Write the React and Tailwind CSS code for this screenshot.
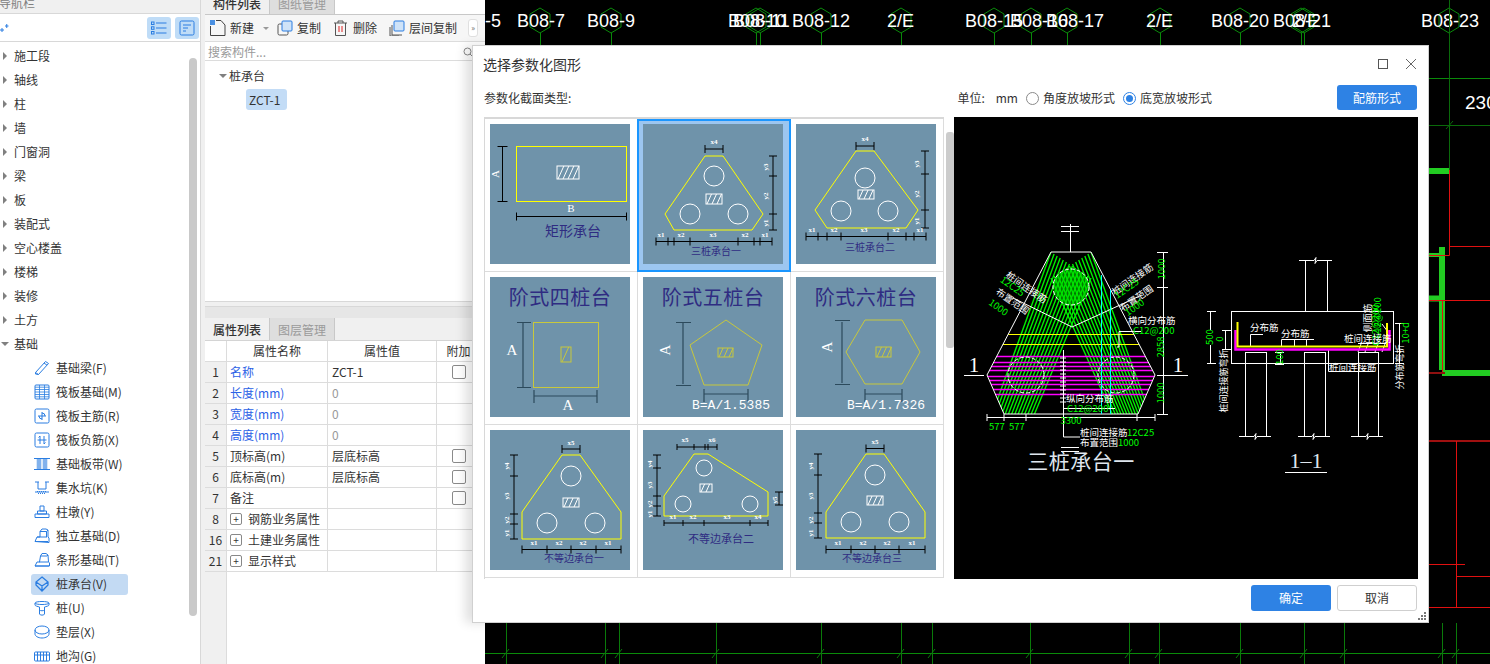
import React from "react";

const BLUE = "#2a7de1";
const NAVY = "#2f2c82";

const Icon = ({ children, size = 16 }) => (
  <svg width={size} height={size} viewBox="0 0 16 16" fill="none" stroke={BLUE} strokeWidth="1" className="shrink-0">
    {children}
  </svg>
);

const navIcons = [
  <Icon><path d="M1.5 12.5 11.5 1.5l3 2-10 11-3-.5zM1.5 12.5l3 2M10 3l3 2.2" /></Icon>,
  <Icon><rect x="1" y="1" width="14" height="14" rx="1" /><path d="M1 5.5h14M1 10.5h14M5.5 1v14M10.5 1v14M1 3.2h14M1 8h14M1 12.8h14" strokeWidth=".8" /></Icon>,
  <Icon><rect x="1" y="1" width="14" height="14" rx="1.5" /><path d="M8 4v8M4 8h8M8 5a3 3 0 0 1 3 3M5 8a3 3 0 0 0 3 3" /></Icon>,
  <Icon><rect x="1" y="1" width="14" height="14" rx="1.5" /><path d="M6 4v8M10 4v8M3.5 8h9M6 4 4.5 5.5M10 12l1.5-1.5" /></Icon>,
  <Icon><rect x="2" y="3" width="12" height="10" fill="#d9e8f8" stroke="none" /><path d="M0 2.5h16M0 13.5h16M4 3v10M6 3v10M10 3v10M12 3v10" /></Icon>,
  <Icon><path d="M1 2h3v7h8V2h3M4 2 5 2M11 2h1M1 12h14" /><path d="M3 11.5h10M4 13.5h8" strokeDasharray="1 1" /></Icon>,
  <Icon><path d="M6 2h4v5H6zM3.5 7h9v3h-9zM1 10h14v3.5H1z" /></Icon>,
  <Icon><path d="M1 13.5 3 9h3V3.5L8 1h4l2 1v7l1 1v4.5zM6 3.500h6.500L14 2M12.500 3.500V9M3 9h10M1 13.500h13" /></Icon>,
  <Icon><path d="M1 14 3 10h2.500L6.500 4 8 1.500h4L14 3l.5 7 1 1v3zM6.500 4h6.500l1-1M5 10h9M1 14h14" /></Icon>,
  <Icon><path d="M8 1 14 6v3l-6 6-6-6V6zM8 9v6M2 6l6 4 6-4" strokeWidth="1.300" /></Icon>,
  <Icon><path d="M1 3c0-2 14-2 14 0v2c0 1-3 1.500-4.500 2v7c0 1.500-5 1.500-5 0V7C4 6.500 1 6 1 5zM1 3c0 2 14 2 14 0M5.500 10c1 1 4 1 5 0" /></Icon>,
  <Icon><ellipse cx="8" cy="6" rx="7" ry="4" /><path d="M1 6v4c0 2 3 4 7 4s7-2 7-4V6" /></Icon>,
  <Icon><rect x="0.500" y="4" width="15" height="9" rx="1" /><path d="M0.500 7h15M3.500 4v9M6.500 4v9M9.500 4v9M12.500 4v9" /></Icon>,
];

const topItems = ["施工段", "轴线", "柱", "墙", "门窗洞", "梁", "板", "装配式", "空心楼盖", "楼梯", "装修", "土方"];
const subItems = ["基础梁(F)", "筏板基础(M)", "筏板主筋(R)", "筏板负筋(X)", "基础板带(W)", "集水坑(K)", "柱墩(Y)", "独立基础(D)", "条形基础(T)", "桩承台(V)", "桩(U)", "垫层(X)", "地沟(G)"];

const CaretR = () => <span className="mr-[7px] h-0 w-0 border-y-[4px] border-l-[4px] border-y-transparent border-l-[#808080]" />;
const CaretD = () => <span className="h-0 w-0 border-x-[4px] border-t-[4px] border-x-transparent border-t-[#808080]" />;

function Nav() {
  return (
    <aside className="flex h-[664px] w-[201px] shrink-0 flex-col border-r border-[#d8d8d8] bg-white">
      <div className="-mt-[8px] flex h-[22px] shrink-0 items-center border-b border-[#d8d8d8] bg-[#f0f0f0] pt-[1px] text-[12px] leading-none text-[#808080]">
        <span className="-ml-[1px]">导航栏</span>
      </div>
      <div className="flex h-[28px] shrink-0 items-center justify-between border-b border-[#d8d8d8] pr-[1px]">
        <svg width="9" height="10" viewBox="0 0 9 10" stroke={BLUE} strokeWidth="1"><path d="M0 7h4M2 5v4M5 3h3.500M6.750 1v4" /></svg>
        <div className="flex gap-[4px]">
          <span className="flex h-[22px] w-[24px] items-center justify-center rounded-[3px] bg-[#bfdcf7]">
            <svg width="16" height="14" viewBox="0 0 16 14" fill="none" stroke={BLUE}><rect x="0.500" y="1" width="2.500" height="2.500" /><rect x="0.500" y="5.800" width="2.500" height="2.500" /><rect x="0.500" y="10.500" width="2.500" height="2.500" /><path d="M5 2h10.500M5 7h10.500M5 12h10.500" /></svg>
          </span>
          <span className="flex h-[22px] w-[24px] items-center justify-center rounded-[3px] bg-[#bfdcf7]">
            <svg width="16" height="16" viewBox="0 0 16 16" fill="none" stroke={BLUE}><rect x="1" y="1" width="14" height="14" rx="1.500" /><path d="M4 5h8M4 8h5M4 11h3" /></svg>
          </span>
        </div>
      </div>
      <div className="flex min-h-0 flex-1 pr-[3px]">
        <div className="min-w-0 flex-1 overflow-hidden pt-[2px] text-[12px] text-[#333]">
          {topItems.map((t) => (
            <div key={t} className="flex h-[24px] items-center pl-[3px] leading-none"><CaretR />{t}</div>
          ))}
          <div className="flex h-[24px] items-center pl-[1px] leading-none"><CaretD /><span className="ml-[5px]">基础</span></div>
          {subItems.map((t, i) => (
            <div key={t} className="flex h-[24px] items-center pl-[31px] leading-none">
              <div className={`flex h-[21px] items-center gap-[6px] rounded-[3px] pl-[3px] ${t === "桩承台(V)" ? "w-[97px] bg-[#c3daf3]" : ""}`}>
                {navIcons[i]}<span>{t}</span>
              </div>
            </div>
          ))}
        </div>
        <div className="mt-[16px] h-[558px] w-[8px] shrink-0 rounded-[4px] bg-[#c9c9c9]" />
      </div>
    </aside>
  );
}

const Tab = ({ active, children }) => (
  <div className={`flex h-full w-[65px] items-center justify-center border-r border-[#c8c8c8] pt-[1px] text-[12px] leading-none ${active ? "bg-[#f0f0f0] font-medium text-[#333]" : "bg-[#dedede] text-[#9a9a9a]"}`}>
    {children}
  </div>
);

function Middle() {
  const rows = [
    ["1", "名称", "ZCT-1", true, "blue"],
    ["2", "长度(mm)", "0", false, "blue"],
    ["3", "宽度(mm)", "0", false, "blue"],
    ["4", "高度(mm)", "0", false, "blue"],
    ["5", "顶标高(m)", "层底标高", true, ""],
    ["6", "底标高(m)", "层底标高", true, ""],
    ["7", "备注", "", true, ""],
    ["8", "钢筋业务属性", "", false, "plus"],
    ["16", "土建业务属性", "", false, "plus"],
    ["21", "显示样式", "", false, "plus"],
  ];
  return (
    <section className="flex h-[664px] w-[284px] shrink-0 flex-col bg-[#f0f0f0] pl-[4px] text-[12px] text-[#333]">
      <div className="-mt-[8px] flex h-[310px] shrink-0 flex-col border-b border-[#d8d8d8] bg-white">
        <div className="flex h-[23px] shrink-0 border-b border-[#c8c8c8]"><Tab active>构件列表</Tab><Tab>图纸管理</Tab></div>
        <div className="flex h-[27px] shrink-0 items-center border-b border-[#dcdcdc] bg-[#f6f6f6] pl-[5px] leading-none">
          <svg width="16" height="16" viewBox="0 0 16 16" fill="none" stroke="#444"><rect x="0" y="0" width="5" height="5" fill="#4a90e2" stroke="none" /><path d="M.500 6v9.500h14.500V5l-4-4.500H6" /></svg>
          <span className="ml-[4px]">新建</span>
          <span className="ml-[9px] mt-[1px] h-0 w-0 border-x-[3px] border-t-[3px] border-x-transparent border-t-[#999]" />
          <svg className="ml-[8px]" width="16" height="16" viewBox="0 0 16 16" fill="none"><rect x="1" y="4" width="10" height="11" rx="1.500" stroke="#555" /><rect x="5" y="1" width="10" height="10" rx="1" fill="#cfe3f8" stroke={BLUE} /></svg>
          <span className="ml-[4px]">复制</span>
          <svg className="ml-[12px]" width="15" height="16" viewBox="0 0 15 16" fill="none" stroke="#555"><path d="M1 3h13M5 3V1h5v2M2.500 3v12.500h10V3" /><path d="M6 6v6M9 6v6" stroke="#d22" /></svg>
          <span className="ml-[5px]">删除</span>
          <svg className="ml-[12px]" width="16" height="16" viewBox="0 0 16 16" fill="none"><path d="M3 5v10h10" stroke="#555" /><path d="M1 7v9h9" stroke="#555" /><rect x="5" y="1" width="10" height="10" rx="1" fill="#cfe3f8" stroke={BLUE} /></svg>
          <span className="ml-[4px]">层间复制</span>
          <span className="ml-[11px] flex h-[18px] w-[10px] items-center justify-center rounded-[3px] border border-[#e0e0e0] bg-white text-[8px] text-[#666]">»</span>
        </div>
        <div className="flex h-[19px] shrink-0 items-center justify-between border-b border-[#dcdcdc] pl-[3px] pr-[12px] pt-[1px] leading-none text-[#9a9a9a]">
          <span>搜索构件...</span>
          <svg width="10" height="10" viewBox="0 0 10 10" fill="none" stroke="#888"><circle cx="4.500" cy="4.500" r="3.500" /><path d="m7 7 3 3" /></svg>
        </div>
        <div className="px-[14px] pt-[3px]">
          <div className="flex h-[24px] items-center gap-[2px] leading-none"><CaretD /><span>桩承台</span></div>
          <div className="ml-[27px] mt-[1px] flex h-[21px] w-[41px] items-center rounded-[3px] bg-[#c3dcf6] pl-[3px] leading-none">ZCT-1</div>
        </div>
      </div>
      <div className="mt-[4px] h-[12px] shrink-0 border-t border-[#d8d8d8] bg-[#e6e6e6]" />
      <div className="flex min-h-0 flex-1 flex-col bg-white">
        <div className="flex h-[23px] shrink-0 border-b border-[#d4d4d4] bg-[#f0f0f0]"><Tab active>属性列表</Tab><Tab>图层管理</Tab></div>
        <div className="flex h-[21px] shrink-0 border-b border-[#dcdcdc] leading-none">
          <div className="w-[22px] border-r border-[#dcdcdc]" />
          <div className="flex w-[101px] items-center justify-center border-r border-[#dcdcdc]">属性名称</div>
          <div className="flex w-[109px] items-center justify-center border-r border-[#dcdcdc]">属性值</div>
          <div className="flex w-[43px] items-center justify-center">附加</div>
        </div>
        {rows.map(([n, name, val, check, kind]) => (
          <div key={n} className="flex h-[21px] shrink-0 border-b border-[#dcdcdc] leading-none">
            <div className="flex w-[22px] items-center justify-center border-r border-[#dcdcdc] bg-[#f0f0f0]">{n}</div>
            <div className={`flex w-[101px] items-center border-r border-[#dcdcdc] pl-[3px] ${kind === "blue" ? "text-[#2c62e6]" : ""}`}>
              {kind === "plus" && <span className="mr-[6px] flex h-[12px] w-[12px] items-center justify-center rounded-[2px] border border-[#888] text-[10px]">+</span>}
              {name}
            </div>
            <div className={`flex w-[109px] items-center border-r border-[#dcdcdc] pl-[4px] ${val === "0" ? "text-[#999]" : ""}`}>{val}</div>
            <div className="flex w-[43px] items-center justify-center">
              {check && <span className="h-[14px] w-[14px] rounded-[2px] border border-[#8a8a8a] bg-white" />}
            </div>
          </div>
        ))}
        <div className="w-[22px] flex-1 border-r border-[#dcdcdc] bg-[#f0f0f0]" />
      </div>
    </section>
  );
}

const labels = [["-5", 485], ["B08-7", 517], ["B08-9", 587], ["B08-10", 728], ["B08-11", 733], ["B08-12", 792], ["2/E", 887], ["B08-15", 965], ["B08-16", 1010], ["B08-17", 1046], ["2/E", 1146], ["B08-20", 1211], ["B08-21", 1273], ["2/E", 1292], ["B08-23", 1421]];
const hexes = [540, 611, 756, 760, 821, 901, 994, 1031, 1067, 1160, 1240, 1301, 1304, 1449];
const botLines = [506, 605, 619, 716, 821, 901, 932, 1030, 1129, 1159, 1240, 1304, 1344, 1442, 1456];

function Canvas() {
  return (
    <div className="h-[664px] min-w-0 flex-1 overflow-hidden bg-black">
      <svg width="1005" height="664" viewBox="485 0 1005 664" fill="none" className="block">
        <g stroke="#0a8a0a">
          {hexes.map((x) => (
            <g key={x}>
              <path d={`M${x} 8l10 6v13l-10 6-10-6V14zM${x}.5 33V46`} />
            </g>
          ))}
        </g>
        {labels.map(([t, x], i) => (
          <text key={i} x={x} y="27" fontSize="18" fill="#fff" className="font-['Liberation_Sans']">{t}</text>
        ))}
        <text x="1465" y="109" fontSize="19" fill="#fff" className="font-['Liberation_Sans']">230</text>
        <path d="M1429 78.500h61" stroke="#0a8a0a" />
        <path d="M1429 125.500h61M1449.500 0V170M1446 129l7-8" stroke="#0a6a0a" />
        <path d="M1429 171h20" stroke="#22cc22" strokeWidth="6" />
        <path d="M1429 255h10" stroke="#22cc22" strokeWidth="4" />
        <path d="M1442 247v123M1429 298.500h11M1442 373h48" stroke="#22cc22" strokeWidth="6" />
        <path d="M1449.500 170v85.500H1429M1449.500 246.500H1490M1429 300.500h61M1442.500 300v72" stroke="#e01010" />
        <path d="M1429 373h16" stroke="#901010" strokeWidth="2" />
        <path d="M1429 441h61" stroke="#a01010" strokeWidth="2" />
        <path d="M1456.500 441v166M1429 564.500h36M1456 576.500h34M1429 607.500h61" stroke="#e01010" />
        <path d="M485 653.500h1005" stroke="#0a8a0a" />
        {botLines.map((x) => (
          <path key={x} d={`M${x}.5 623v41M${x - 4} 658l7-9`} stroke="#0a7a0a" />
        ))}
      </svg>
    </div>
  );
}

const DimH = ({ y, xs, tick = 4 }) => (
  <path d={`M${xs[0]} ${y}H${xs[xs.length - 1]}` + xs.map((x) => `M${x} ${y - tick}V${y + tick}`).join("")} stroke="#000" />
);
const DimV = ({ x, ys, tick = 4 }) => (
  <path d={`M${x} ${ys[0]}V${ys[ys.length - 1]}` + ys.map((y) => `M${x - tick} ${y}H${x + tick}`).join("")} stroke="#000" />
);
const Hatch = ({ x, y, w, h, c = "#fff" }) => {
  const n = Math.floor((w - h * 0.45) / 5);
  let d = "";
  for (let i = 0; i <= n; i++) d += `M${x + 1 + i * 5} ${y + h}L${x + 1 + i * 5 + h * 0.45} ${y}`;
  return (
    <g stroke={c}>
      <rect x={x} y={y} width={w} height={h} />
      <path d={d} />
    </g>
  );
};
const Holes = ({ c, r = 10 }) => c.map(([x, y], i) => <circle key={i} cx={x} cy={y} r={r} stroke="#fff" />);
const Tiny = ({ x, y, t, rot }) => (
  <text x={x} y={y} fontSize="7" fontWeight="700" fill="#fff" textAnchor="middle" transform={rot ? `rotate(-90 ${x} ${y})` : undefined} className="font-['Liberation_Serif']">{t}</text>
);
const Cap = ({ x, y, t, s = 10 }) => (
  <text x={x} y={y} fontSize={s} fill={NAVY} textAnchor="middle" dominantBaseline="middle">{t}</text>
);
const Big = ({ t }) => <text x="70" y="23" fontSize="20" fill={NAVY} textAnchor="middle" dominantBaseline="middle" letterSpacing="0.500">{t}</text>;
const SerifA = ({ x, y, rot }) => (
  <text x={x} y={y} fontSize="15" fill="#fff" textAnchor="middle" dominantBaseline="middle" transform={rot ? `rotate(-90 ${x} ${y})` : undefined} className="font-['Liberation_Serif']">A</text>
);
const Arrows = ({ d }) => <path d={d} stroke="#2c4a5c" strokeWidth="1.200" />;
const Yellow = ({ p, c = "#ffff00", w = 1 }) => <polygon points={p} stroke={c} strokeWidth={w} />;

const tiles = [
  <>
    <rect x="26.500" y="22.500" width="110" height="55" stroke="#ffff00" />
    <Hatch x={67} y={42} w={22} h={13} />
    <DimV x={12.500} ys={[22.500, 77.500]} tick={5} />
    <text x="6" y="50" fontSize="11" fill="#fff" textAnchor="middle" dominantBaseline="middle" transform="rotate(-90 6 50)" className="font-['Liberation_Serif']">A</text>
    <DimH y={92.500} xs={[26.500, 136.500]} />
    <text x="81" y="85" fontSize="11" fill="#fff" textAnchor="middle" dominantBaseline="middle" className="font-['Liberation_Serif']">B</text>
    <Cap x={83} y={108} t="矩形承台" s={14} />
  </>,
  <>
    <Yellow p="62,32 80,32 120,90 109,106 31,106 22,90" />
    <Holes c={[[71, 52], [47, 90], [95, 90]]} />
    <Hatch x={63} y={70} w={16} h={10} />
    <DimH y={25} xs={[62, 80]} /><Tiny x={71} y={20} t="x4" />
    <DimV x={130} ys={[32, 52, 90, 106]} />
    <Tiny x={125} y={43} t="y3" rot /><Tiny x={125} y={72} t="y2" rot /><Tiny x={125} y={99} t="y1" rot />
    <DimH y={117.500} xs={[13, 25, 31, 47, 95, 111, 117, 129]} />
    <Tiny x={18} y={113} t="x1" /><Tiny x={38} y={113} t="x2" /><Tiny x={70} y={113} t="x3" /><Tiny x={102} y={113} t="x2" /><Tiny x={122} y={113} t="x1" />
    <Cap x={73} y={128} t="三桩承台一" />
  </>,
  <>
    <Yellow p="60,27 78,27 122,86 110,104 31,104 19,86" />
    <Holes c={[[69, 54], [45, 87], [92, 87]]} />
    <Hatch x={62} y={66} w={16} h={9} />
    <DimH y={22} xs={[60, 78]} /><Tiny x={69} y={17} t="x4" />
    <DimV x={129} ys={[27, 50, 86, 104]} />
    <Tiny x={123} y={40} t="y3" rot /><Tiny x={123} y={70} t="y2" rot /><Tiny x={123} y={97} t="y1" rot />
    <DimH y={112.500} xs={[10, 22, 31, 45, 92, 110, 118, 130]} />
    <Tiny x={16} y={108} t="x1" /><Tiny x={38} y={108} t="x2" /><Tiny x={68} y={108} t="x3" /><Tiny x={100} y={108} t="x2" /><Tiny x={124} y={108} t="x1" />
    <Cap x={74} y={124} t="三桩承台二" />
  </>,
  <>
    <Big t="阶式四桩台" />
    <rect x="43.500" y="45.500" width="65" height="65" stroke="#c8c83c" />
    <Hatch x={71} y={70} w={10} h={15} c="#c8c83c" />
    <Arrows d="M33 46V110M27 45.500H41M27 110.500H41M44 119H107M44 113V126M107 113V126" />
    <SerifA x={22} y={75} /><SerifA x={78} y={130} />
  </>,
  <>
    <Big t="阶式五桩台" />
    <Yellow p="83,43 119,68 105,108 61,108 47,68" c="#c8c83c" />
    <Hatch x={75} y={71} w={15} h={9} c="#c8c83c" />
    <Arrows d="M40 46V107M33 45.500H48M33 108.500H48M61 117H105M61 112V125M105 112V125" />
    <SerifA x={24} y={73} rot />
    <text x="88" y="132" fontSize="13" fill="#fff" textAnchor="middle" className="font-['Liberation_Mono']">B=A/1.5385</text>
  </>,
  <>
    <Big t="阶式六桩台" />
    <Yellow p="69,43 106,43 124,75 106,107 69,107 50,75" c="#c8c83c" />
    <Hatch x={80} y={70} w={15} h={10} c="#c8c83c" />
    <Arrows d="M46 45V106M39 43.500H54M39 107.500H54M69 117H106M69 112V125M106 112V125" />
    <SerifA x={33} y={70} rot />
    <text x="90" y="132" fontSize="13" fill="#fff" textAnchor="middle" className="font-['Liberation_Mono']">B=A/1.7326</text>
  </>,
  <>
    <Yellow p="72,25 90,25 131,82 131,109 32,109 32,82" />
    <Holes c={[[81, 46], [57, 93], [105, 93]]} />
    <Hatch x={73} y={68} w={16} h={9} />
    <DimH y={19} xs={[72, 90]} /><Tiny x={81} y={15} t="x5" />
    <DimV x={24} ys={[25, 46, 84, 94, 109]} />
    <Tiny x={19} y={36} t="y4" rot /><Tiny x={19} y={66} t="y3" rot /><Tiny x={19} y={90} t="y2" rot /><Tiny x={19} y={103} t="y1" rot />
    <DimH y={119.500} xs={[32, 57, 81, 106, 131]} />
    <Tiny x={44} y={115} t="x1" /><Tiny x={69} y={115} t="x2" /><Tiny x={93} y={115} t="x2" /><Tiny x={118} y={115} t="x1" />
    <Cap x={84} y={129} t="不等边承台一" />
  </>,
  <>
    <Yellow p="51,24 65,24 125,62 125,86 21,86 21,66" />
    <Holes c={[[61, 38], [40, 74], [107, 74]]} r={8} />
    <Hatch x={57} y={54} w={12} h={8} />
    <DimH y={17} xs={[34, 51, 62, 65, 74]} tick={3} /><Tiny x={42} y={12} t="x5" /><Tiny x={69} y={12} t="x6" />
    <DimV x={14} ys={[25, 38, 66, 76, 86]} />
    <Tiny x={9} y={34} t="y4" rot /><Tiny x={9} y={55} t="y3" rot /><Tiny x={9} y={74} t="y2" rot /><Tiny x={9} y={84} t="y1" rot />
    <DimV x={136} ys={[62, 75]} /><Tiny x={134} y={70} t="y5" rot />
    <DimH y={93} xs={[21, 40, 61, 107, 125]} tick={3} />
    <Tiny x={30} y={89} t="x1" /><Tiny x={50} y={89} t="x2" /><Tiny x={84} y={89} t="x3" /><Tiny x={115} y={89} t="x4" />
    <Cap x={78} y={110} t="不等边承台二" s={11} />
  </>,
  <>
    <Yellow p="70,24 88,24 129,82 129,108 30,108 30,82" />
    <Holes c={[[79, 45], [55, 92], [103, 92]]} />
    <Hatch x={71} y={66} w={16} h={9} />
    <DimH y={18.500} xs={[70, 88]} /><Tiny x={79} y={14} t="x5" />
    <DimV x={22} ys={[24, 45, 83, 93, 108]} />
    <Tiny x={17} y={36} t="y4" rot /><Tiny x={17} y={66} t="y3" rot /><Tiny x={17} y={90} t="y2" rot /><Tiny x={17} y={103} t="y1" rot />
    <DimH y={119.500} xs={[30, 55, 79, 103, 129]} />
    <Tiny x={42} y={115} t="x1" /><Tiny x={67} y={115} t="x2" /><Tiny x={91} y={115} t="x2" /><Tiny x={116} y={115} t="x1" />
    <Cap x={76} y={129} t="不等边承台三" />
  </>,
];

function bandLines(a1, a2, b1, b2, n) {
  let d = "";
  for (let i = 0; i <= n; i++) {
    const t = i / n;
    const p = a1[0] + (b1[0] - a1[0]) * t;
    const q = a1[1] + (b1[1] - a1[1]) * t;
    const r = a2[0] + (b2[0] - a2[0]) * t;
    const s = a2[1] + (b2[1] - a2[1]) * t;
    d += `M${p} ${q}L${r} ${s}`;
  }
  return d;
}

const W = ({ x, y, t, s = 9.500, a = "start", rot, c = "#fff" }) => (
  <text x={x} y={y} fontSize={s} fill={c} textAnchor={a} dominantBaseline="middle" transform={rot ? `rotate(${rot} ${x} ${y})` : undefined}>{t}</text>
);
const G = (p) => <W {...p} c="#00ff00" />;

function Preview() {
  const band1 = bandLines([1051, 252], [990, 420], [1091, 278], [1032, 420], 13);
  const band2 = bandLines([1091, 252], [1152, 420], [1051, 278], [1115, 420], 13);
  const mags = [356, 362, 366, 370, 376, 380, 384, 389, 394];
  let ticks = "";
  for (let y = 358; y < 405; y += 4) ticks += `M1060 ${y}h6`;
  return (
    <svg width="464" height="462" viewBox="954 117 464 462" fill="none" className="block shrink-0 bg-black">
      <defs>
        <clipPath id="cap"><polygon points="1051,252 1091,252 1155,375 1138,414 1004,414 987,375" /></clipPath>
      </defs>
      <g clipPath="url(#cap)">
        <path d={band1} stroke="#00ee00" strokeWidth="1.400" />
        <path d={band2} stroke="#00ee00" strokeWidth="1.400" />
        <circle cx="1071" cy="287" r="18" fill="#00d800" fillOpacity=".55" />
        {mags.map((y) => <path key={y} d={`M980 ${y}.5H1160`} stroke="#ff00ff" strokeWidth="1.300" />)}
        <path d="M1000 334.500H1140M1000 344.500H1140" stroke="#ffff00" />
      </g>
      <polygon points="1051,252 1091,252 1155,375 1138,414 1004,414 987,375" stroke="#fff" />
      <g stroke="#fff" strokeDasharray="4 2">
        <circle cx="1071" cy="287" r="18" />
        <circle cx="1026" cy="375" r="18" />
        <circle cx="1116" cy="375" r="18" />
      </g>
      <path d="M1070.500 224V252M1061 226.500H1079M1061 231.500H1079M1061 447.500H1079M1061 451.500H1079" stroke="#fff" />
      <path d="M1013 298 1072 327 1142 295" stroke="#fff" />
      <path d="M1101.500 275V414M1110.500 290V414" stroke="#00ffff" />
      <path d={`M1063.500 350V437H1080M1063 408.500H1115${ticks}`} stroke="#fff" />
      <path d="M1163.500 252V414M1157 252.500H1168M1157 287.500H1168M1157 375.500H1168M1157 414.500H1168M987 417.500H1155M987 414V421M1004 414V421M1026 414V421M1137 414V421M1155 414V421" stroke="#fff" />
      <path d="M964 375.500H984M1168 375.500H1188M1119 331.500H1141M1119 331.500V347H1117" stroke="#fff" />
      <text x="974" y="367" fontSize="21" fill="#fff" textAnchor="middle" dominantBaseline="middle" className="font-['Liberation_Serif']">1</text>
      <text x="1178" y="367" fontSize="21" fill="#fff" textAnchor="middle" dominantBaseline="middle" className="font-['Liberation_Serif']">1</text>
      <G x={1162} y={269} t="1000" a="middle" rot={-90} />
      <G x={1161} y={347} t="2858" a="middle" rot={-90} />
      <G x={1161} y={393} t="1000" a="middle" rot={-90} />
      <G x={989} y={427} t="577" /><G x={1009} y={427} t="577" />
      <G x={1071} y={421} t="3300" a="middle" />
      <W x={1080} y={433} t="桩间连接筋" /><G x={1127} y={433} t="12C25" />
      <W x={1080} y={443} t="布置范围" /><G x={1118} y={443} t="1000" />
      <W x={1026} y={288} t="桩间连接筋" a="middle" rot={35} />
      <G x={1012} y={287} t="12C25" a="middle" rot={35} />
      <W x={1012} y={302} t="布置范围" a="middle" rot={35} />
      <G x={998} y={308} t="1000" a="middle" rot={35} />
      <W x={1133} y={280} t="桩间连接筋" a="middle" rot={-35} />
      <G x={1127} y={289} t="12C25" a="middle" rot={-35} />
      <W x={1137} y={299} t="布置范围" a="middle" rot={-35} />
      <G x={1135} y={308} t="1000" a="middle" rot={-35} />
      <W x={1128} y={321} t="横向分布筋" />
      <G x={1133} y={331} t="C12@200" />
      <W x={1066} y={399} t="纵向分布筋" />
      <G x={1067} y={409} t="C12@200" />
      <text x="1081" y="463" fontSize="21" fill="#dfe6ee" textAnchor="middle" dominantBaseline="middle" letterSpacing="0.500">三桩承台一</text>

      <g stroke="#fff">
        <rect x="1231.500" y="311.500" width="162" height="52" />
        <path d="M1305.500 260V311M1327.500 260V311M1299 260.500H1314l2-3-1 6 2-3H1332" />
        <path d="M1245.500 352V436M1266.500 352V436M1245 352.500H1267M1304.500 352V436M1325.500 352V436M1304 352.500H1326M1358.500 352V436M1378.500 352V436M1358 352.500H1379" />
        <path d="M1239 436.500H1254l2-3-1 6 2-3H1271M1298 436.500H1312l2-3-1 6 2-3H1330M1351 436.500H1366l2-3-1 6 2-3H1383" />
        <path d="M1210.500 311V330M1210.500 345V363M1207 311.500H1216M1207 363.500H1216M1225.500 330V349M1222 330.500H1231M1222 349.500H1231M1399.500 323V363M1395 323.500H1404M1395 363.500H1404" />
        <path d="M1250.500 347V334.500H1263M1281.500 347V339.500H1314M1294.500 340V347M1306.500 340V347M1358 343.500H1386M1358 352l3-8M1365 352l3-8M1375 352l3-8M1382 352l3-8M1328.500 349V371.500H1374M1275 352.500H1284M1275 364.500H1284M1280.500 352V364M1382 324l6 8" />
      </g>
      <path d="M1235.500 330V349.500H1389.500V330" stroke="#ff00ff" strokeWidth="2.500" />
      <path d="M1237.500 322V346.500H1387V323" stroke="#ffff00" strokeWidth="2" />
      <G x={1210} y={337} t="500" a="middle" rot={-90} />
      <G x={1220} y={339} t="0" a="middle" rot={-90} />
      <G x={1406} y={333} t="10+d" a="middle" rot={-90} />
      <G x={1280} y={357} t="100" a="middle" rot={-90} />
      <G x={1378} y={318} t="C12@200" a="middle" rot={-90} />
      <G x={1376} y={325} t="C12@200" a="middle" rot={-90} />
      <W x={1368} y={318} t="侧面筋" a="middle" rot={-90} />
      <W x={1225} y={381} t="桩间连接筋弯折" s={9} a="middle" rot={-90} />
      <W x={1401} y={367} t="分布筋弯折" s={9} a="middle" rot={-90} />
      <W x={1250} y={328} t="分布筋" />
      <W x={1281} y={334} t="分布筋" />
      <W x={1344} y={339} t="桩间连接筋" />
      <W x={1329} y={368} t="桩间连接筋" />
      <text x="1306" y="463" fontSize="22" fill="#dfe6ee" textAnchor="middle" dominantBaseline="middle" className="font-['Liberation_Serif']">1–1</text>
      <path d="M1285 472.500H1327" stroke="#fff" />
    </svg>
  );
}

const Radio = ({ on, children }) => (
  <span className="flex items-center gap-[4px]">
    <span className={`flex h-[13px] w-[13px] items-center justify-center rounded-full border bg-white ${on ? "border-[#2e82e4]" : "border-[#8a8a8a]"}`}>
      {on && <span className="h-[7px] w-[7px] rounded-full bg-[#2e82e4]" />}
    </span>
    {children}
  </span>
);

function Dialog() {
  return (
    <div className="absolute left-[472px] top-[45px] flex h-[578px] w-[957px] flex-col border border-[#d0d0d0] bg-white text-[12px] text-[#333] shadow-[-7px_0_10px_rgba(0,0,0,0.12)]">
      <div className="flex h-[38px] shrink-0 items-center justify-between pb-[2px] pl-[10px] pr-[11px]">
        <span className="text-[14px] leading-none">选择参数化图形</span>
        <div className="flex items-center gap-[17px]">
          <span className="h-[10px] w-[10px] border border-[#555]" />
          <svg width="12" height="12" viewBox="0 0 12 12" stroke="#666"><path d="m1 1 10 10M11 1 1 11" /></svg>
        </div>
      </div>
      <div className="flex h-[33px] shrink-0 items-start justify-between px-[11px] leading-none">
        <span className="mt-[8px]">参数化截面类型:</span>
        <div className="flex">
          <div className="mr-[125px] mt-[2px] flex items-center">
            <span>单位:</span>
            <span className="ml-[11px] mr-[8px]">mm</span>
            <Radio>角度放坡形式</Radio>
            <span className="w-[8px]" />
            <Radio on>底宽放坡形式</Radio>
          </div>
          <button className="mt-[1px] h-[25px] w-[80px] rounded-[3px] bg-[#2e82e4] text-[12px] text-white">配筋形式</button>
        </div>
      </div>
      <div className="flex h-[462px] shrink-0 pl-[11px]">
        <div className="h-[462px] w-[460px] shrink-0 overflow-hidden border-l border-t-2 border-[#d8d8d8]">
          <div className="grid grid-cols-[153px_153px_153px] grid-rows-[153px_153px_153px]">
            {tiles.map((t, i) => (
              <div key={i} className={i === 1 ? "-ml-px border-2 border-[#1a96ff] bg-[#9cc6f0] pl-[4px] pt-[3px]" : "border-b border-r border-[#dcdcdc] pl-[5px] pt-[5px]"}>
                <svg width="140" height="140" viewBox="0 0 140 140" fill="none" className="block bg-[#6f93aa]">{t}</svg>
              </div>
            ))}
          </div>
        </div>
        <div className="w-[10px] shrink-0 pl-[2px] pt-[15px]">
          <div className="h-[216px] w-[8px] rounded-[3px] bg-[#cccccc]" />
        </div>
        <Preview />
      </div>
      <div className="relative flex flex-1 justify-end gap-[6px] pr-[11px] pt-[6px] text-[12px]">
        <button className="h-[26px] w-[80px] rounded-[3px] bg-[#2e82e4] text-white">确定</button>
        <button className="h-[26px] w-[80px] rounded-[3px] border border-[#cfcfcf] bg-white text-[#333]">取消</button>
        <svg className="absolute bottom-[1px] right-[1px]" width="9" height="9" viewBox="0 0 9 9" fill="#777"><path d="M6 0h2v2H6zM3 3h2v2H3zM6 3h2v2H6zM0 6h2v2H0zM3 6h2v2H3zM6 6h2v2H6z" /></svg>
      </div>
    </div>
  );
}

export default function App() {
  return (
    <div className="relative flex h-[664px] w-[1490px] overflow-hidden bg-black font-['Noto_Sans_CJK_SC','Noto_Sans',sans-serif]">
      <Nav />
      <Middle />
      <Canvas />
      <Dialog />
    </div>
  );
}
